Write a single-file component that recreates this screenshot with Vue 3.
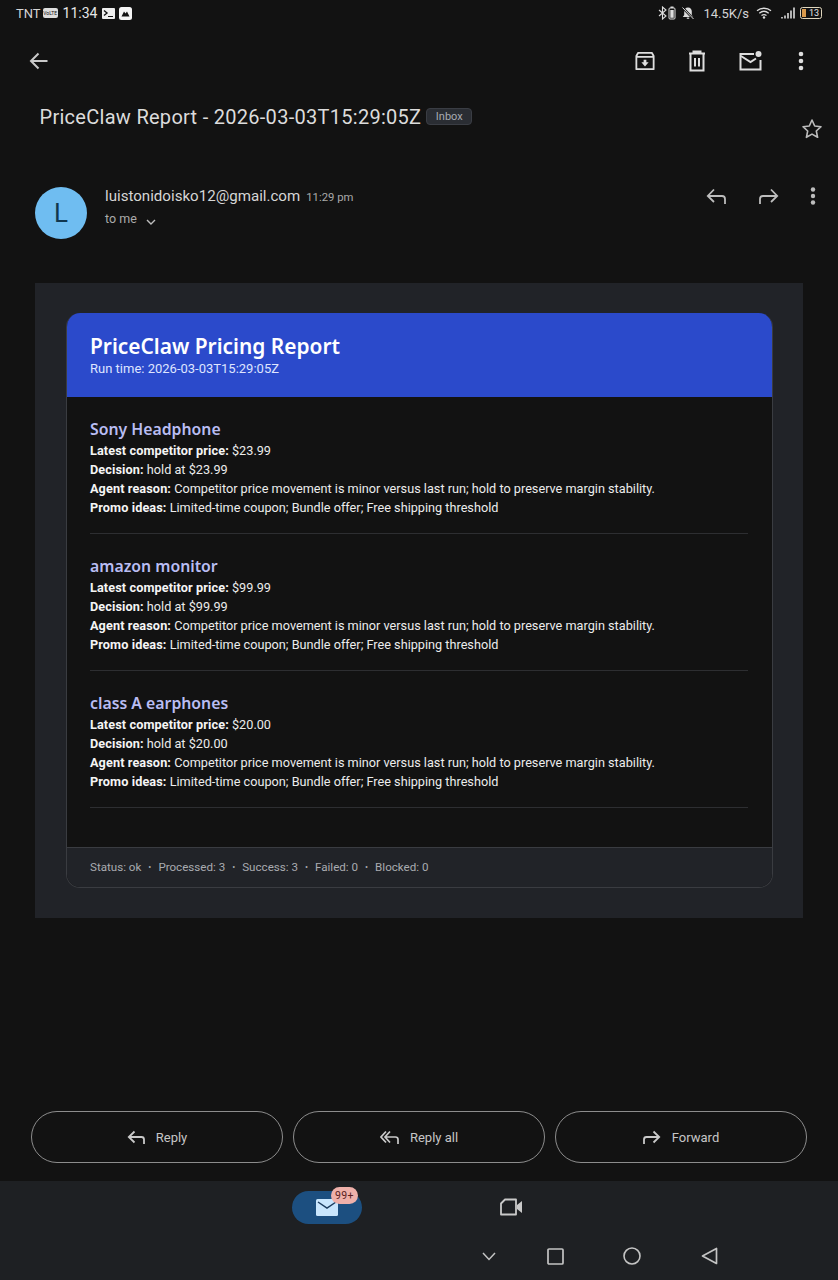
<script setup>
const products = [
  { name: 'Sony Headphone', price: '$23.99' },
  { name: 'amazon monitor', price: '$99.99' },
  { name: 'class A earphones', price: '$20.00' },
]
const reason = 'Competitor price movement is minor versus last run; hold to preserve margin stability.'
const promo = 'Limited-time coupon; Bundle offer; Free shipping threshold'
const stats = ['Status: ok', 'Processed: 3', 'Success: 3', 'Failed: 0', 'Blocked: 0']
</script>

<template>
  <div class="screen">
    <div class="status">
      <div class="status-side">
        <span class="carrier">TNT</span>
        <span class="volte">VoLTE</span>
        <span class="clock">11:34</span>
        <svg class="term" width="13" height="11" viewBox="0 0 13 11"><rect width="13" height="11" rx="1" fill="#eee"/><path d="M2 2.500 5 5 2 7.500" fill="none" stroke="#111" stroke-width="1.400"/><path d="M6 8.500h5" stroke="#111"/></svg>
        <svg class="app" width="13" height="13" viewBox="0 0 13 13"><rect width="13" height="13" rx="2.500" fill="#f4f4f4"/><path d="M2.500 9.500 5 4.500l1.500 2L8 4.500l2.500 5z" fill="#111"/></svg>
      </div>
      <div class="status-side">
        <svg width="10" height="14" viewBox="0 0 10 14"><path d="M1 4l7 6-3.500 3V1L8 4l-7 6" fill="none" stroke="#ddd" stroke-width="1.100"/></svg>
        <svg width="8" height="14" viewBox="0 0 8 14"><rect x="1" y="2" width="6" height="11" rx="1" fill="none" stroke="#ddd"/><rect x="2.500" y="0.500" width="3" height="1.500" fill="#ddd"/><rect x="2.300" y="4" width="3.400" height="7.800" fill="#ddd"/></svg>
        <svg class="bell" width="14" height="14" viewBox="0 0 14 14"><path d="M7 1.500c2.500 0 3.800 1.800 3.800 4V9l1.400 2H1.800l1.400-2V5.500c0-2.200 1.300-4 3.800-4z" fill="#ddd"/><path d="M5.800 12.200h2.400" stroke="#ddd" stroke-width="1.200"/><path d="M1.500 1.500l11 11.500" stroke="#111" stroke-width="2.400"/><path d="M1.500 1.500l11 11.500" stroke="#ddd" stroke-width="1"/></svg>
        <span class="speed">14.5K/s</span>
        <svg class="wifi" width="16" height="12" viewBox="0 0 16 12"><path d="M1 3.800C5 .4 11 .4 15 3.800M3.300 6.200c2.800-2.300 6.600-2.300 9.400 0M5.500 8.500c1.600-1.200 3.400-1.200 5 0" fill="none" stroke="#ddd" stroke-width="1.300"/><circle cx="8" cy="10.500" r="1.200" fill="#ddd"/></svg>
        <svg class="signal" width="14" height="12" viewBox="0 0 14 12"><path d="M1 10v1.500M4 8.500v3M7 6v5.500M10 3.500v8M13 .5v11" stroke="#ddd" stroke-width="1.600"/></svg>
        <div class="battery"><span class="battery-fill"></span><span class="battery-num">13</span></div>
      </div>
    </div>

    <div class="toolbar">
      <svg class="back" width="20" height="18" viewBox="0 0 20 18"><path d="M18.500 9H2M9.500 1.500 2 9l7.500 7.500" fill="none" stroke="#c9c9c9" stroke-width="2"/></svg>
      <div class="tools">
        <svg width="20" height="20" viewBox="0 0 22 22"><path d="M3.500 2h15l2 3.500V20H1.500V5.500zM1.500 6.500h19" fill="none" stroke="#dedede" stroke-width="2" stroke-linejoin="round"/><path d="M9.500 9.500h3v3H15L11 17l-4-4.500h2.500z" fill="#dedede"/></svg>
        <svg width="18" height="22" viewBox="0 0 18 22"><path d="M1 3.500h16M5.500 3V1.500h7V3M2.500 4v16.500h13V4" fill="none" stroke="#dedede" stroke-width="2"/><path d="M7 8v8.500M11 8v8.500" stroke="#dedede" stroke-width="2"/></svg>
        <svg width="23" height="20" viewBox="0 0 23 20"><path d="M15 3H1.500v15.500h20V9" fill="none" stroke="#dedede" stroke-width="2"/><path d="M2 5l9.500 6L17 7.500" fill="none" stroke="#dedede" stroke-width="2"/><circle cx="19.500" cy="3" r="3" fill="#dedede"/></svg>
        <svg class="tools-more" width="6" height="20" viewBox="0 0 6 20"><circle cx="3" cy="3" r="2.300" fill="#dedede"/><circle cx="3" cy="10" r="2.300" fill="#dedede"/><circle cx="3" cy="17" r="2.300" fill="#dedede"/></svg>
      </div>
    </div>

    <div class="subject-row">
      <span class="subject">PriceClaw Report - 2026-03-03T15:29:05Z</span>
      <span class="label">Inbox</span>
      <svg class="star" width="22" height="21" viewBox="0 0 22 21"><path d="M11 2l2.700 6 6.300.7-4.700 4.300 1.300 6.300L11 16.100l-5.600 3.200L6.700 13 2 8.700 8.300 8z" fill="none" stroke="#bdbdbd" stroke-width="1.600" stroke-linejoin="round"/></svg>
    </div>

    <div class="sender">
      <div class="avatar">L</div>
      <div class="sender-text">
        <div class="sender-line"><span class="address">luistonidoisko12@gmail.com</span><span class="time">11:29 pm</span></div>
        <div class="recipient"><span>to me</span><svg width="10" height="6" viewBox="0 0 10 6"><path d="M1 1l4 4 4-4" fill="none" stroke="#bdbdbd" stroke-width="1.400"/></svg></div>
      </div>
      <div class="sender-actions">
        <svg width="20" height="17" viewBox="0 0 20 17"><path d="M19 16v-5c0-2-1-3-3-3H2M8 1.500 1.800 8 8 14" fill="none" stroke="#bdbdbd" stroke-width="1.800"/></svg>
        <svg width="20" height="17" viewBox="0 0 20 17"><path d="M1 16v-5c0-2 1-3 3-3h14M12 1.500 18.200 8 12 14" fill="none" stroke="#bdbdbd" stroke-width="1.800"/></svg>
        <svg width="6" height="18" viewBox="0 0 6 18"><circle cx="3" cy="2.500" r="2.200" fill="#bdbdbd"/><circle cx="3" cy="9" r="2.200" fill="#bdbdbd"/><circle cx="3" cy="15.500" r="2.200" fill="#bdbdbd"/></svg>
      </div>
    </div>

    <div class="mail-wrap">
      <div class="card">
        <div class="card-head">
          <div class="card-title">PriceClaw Pricing Report</div>
          <div class="card-run">Run time: 2026-03-03T15:29:05Z</div>
        </div>
        <div class="card-body">
          <div v-for="p in products" :key="p.name" class="item">
            <div class="item-name">{{ p.name }}</div>
            <div class="item-line"><b>Latest competitor price:</b> {{ p.price }}</div>
            <div class="item-line"><b>Decision:</b> hold at {{ p.price }}</div>
            <div class="item-line"><b>Agent reason:</b> {{ reason }}</div>
            <div class="item-line"><b>Promo ideas:</b> {{ promo }}</div>
          </div>
        </div>
        <div class="card-foot">
          <template v-for="(s, i) in stats" :key="s">
            <span v-if="i" class="dot">•</span><span>{{ s }}</span>
          </template>
        </div>
      </div>
    </div>

    <div class="actions">
      <div class="pill">
        <svg width="18" height="15" viewBox="0 0 18 15"><path d="M17 14V9.500C17 8 16 7 14.500 7H2M7.500 1.500 1.800 7l5.700 5.500" fill="none" stroke="#c9c9c9" stroke-width="1.800"/></svg>
        <span>Reply</span>
      </div>
      <div class="pill">
        <svg width="19" height="15" viewBox="0 0 19 15"><path d="M18 14V9.500C18 8 17 7 15.500 7H6M10 1.500 5 7l5 5.500M6 1.500 1 7l5 5.500" fill="none" stroke="#c9c9c9" stroke-width="1.700"/></svg>
        <span>Reply all</span>
      </div>
      <div class="pill">
        <svg width="18" height="15" viewBox="0 0 18 15"><path d="M1 14V9.500C1 8 2 7 3.500 7H16M10.500 1.500 16.200 7l-5.700 5.500" fill="none" stroke="#c9c9c9" stroke-width="1.800"/></svg>
        <span>Forward</span>
      </div>
    </div>

    <div class="bottom">
      <div class="tabs">
        <div class="mail-tab">
          <svg width="22" height="17" viewBox="0 0 22 17"><rect width="22" height="17" rx="1.500" fill="#c9e6fd"/><path d="M2 3l9 6 9-6" fill="none" stroke="#1c3c5e" stroke-width="1.500"/></svg>
          <span class="badge">99+</span>
        </div>
        <svg class="video" width="24" height="18" viewBox="0 0 24 18"><path d="M6 1.500h11v15H2V5.500z" fill="none" stroke="#c9c9c9" stroke-width="1.800" stroke-linejoin="round"/><path d="M18 7l5-4v12l-5-4z" fill="#c9c9c9"/></svg>
      </div>
      <div class="nav">
        <svg class="nav-chevron" width="14" height="9" viewBox="0 0 14 9"><path d="M1 1l6 6.500L13 1" fill="none" stroke="#c4c4c4" stroke-width="1.500"/></svg>
        <svg width="17" height="17" viewBox="0 0 17 17"><rect x="1" y="1" width="15" height="15" rx="1" fill="none" stroke="#c4c4c4" stroke-width="1.700"/></svg>
        <svg width="18" height="18" viewBox="0 0 18 18"><circle cx="9" cy="9" r="8" fill="none" stroke="#c4c4c4" stroke-width="1.600"/></svg>
        <svg width="17" height="18" viewBox="0 0 17 18"><path d="M15.500 1.500v15L1.500 9z" fill="none" stroke="#c4c4c4" stroke-width="1.700" stroke-linejoin="round"/></svg>
      </div>
    </div>
  </div>
</template>

<style scoped>
.screen {
  width: 838px;
  height: 1280px;
  background: #121212;
  display: flex;
  flex-direction: column;
  font-family: Roboto, "Liberation Sans", sans-serif;
  color: #e3e3e3;
  overflow: hidden;
}
.status {
  height: 28px;
  padding: 0 16px 2px 16px;
  box-sizing: border-box;
  display: flex;
  justify-content: space-between;
  align-items: center;
}
.status-side { display: flex; align-items: center; }
.carrier { font-size: 13px; color: #d5d5d5; }
.volte {
  margin-left: 2px;
  width: 15px;
  height: 10px;
  background: #ddd;
  color: #111;
  font-size: 5px;
  line-height: 10px;
  text-align: center;
  border-radius: 2px;
  overflow: hidden;
}
.clock { margin: 0 5px; font-size: 14px; color: #e6e6e6; }
.app { margin-left: 4px; }
.bell { margin-left: 5px; }
.speed { margin: 0 7px 0 8px; font-size: 13px; color: #d5d5d5; }
.signal { margin-left: 9px; }
.battery {
  position: relative;
  margin-left: 5px;
  width: 20px;
  height: 10px;
  border: 1px solid #e0d6bd;
  border-radius: 2.500px;
  font-size: 9px;
  line-height: 10px;
  text-align: right;
  color: #e6e6e6;
}
.battery-fill { position: absolute; left: 1px; top: 1px; bottom: 1px; width: 4px; background: #d99a4c; }
.battery-num { position: relative; padding-right: 2px; }
.toolbar {
  height: 66px;
  padding: 0 34px 0 29px;
  display: flex;
  align-items: center;
  justify-content: space-between;
}
.tools { display: flex; align-items: center; gap: 33px; }
.tools-more { margin-left: 3.500px; }
.subject-row {
  position: relative;
  height: 93px;
  padding: 8px 0 0 39.500px;
  box-sizing: border-box;
  display: flex;
  align-items: flex-start;
  gap: 5px;
}
.subject { font-size: 20px; line-height: 30px; letter-spacing: 0.280px; color: #dcdcdc; white-space: nowrap; }
.label {
  margin-top: 6px;
  height: 17px;
  padding: 0 8.500px;
  background: #2a2d33;
  border: 1px solid #3a3d44;
  border-radius: 4px;
  font-size: 11px;
  line-height: 16px;
  color: #a8abb2;
  box-sizing: border-box;
}
.star { position: absolute; top: 24px; right: 15px; }
.sender { height: 96px; padding-left: 35px; display: flex; align-items: flex-start; }
.avatar {
  width: 52px;
  height: 52px;
  border-radius: 50%;
  background: #6fbdf1;
  color: #10364f;
  font-size: 26px;
  line-height: 52px;
  text-align: center;
  flex: none;
}
.sender-text { margin-left: 18px; }
.sender-line { display: flex; align-items: baseline; gap: 6px; line-height: 19px; }
.address { font-size: 15.100px; color: #d6d6d6; }
.time { font-size: 11.300px; color: #a9a9a9; }
.recipient { margin-top: 3px; display: flex; align-items: center; gap: 9px; font-size: 12.500px; line-height: 18px; color: #ababab; }
.recipient svg { margin-top: 5px; }
.sender-actions { margin-left: auto; margin-right: 22px; display: flex; align-items: center; gap: 32px; height: 18px; }
.sender-actions svg:first-child { margin-right: 1px; }
.sender-actions svg:last-child { margin-left: -1px; }
.mail-wrap {
  margin: 0 35px;
  padding: 30px 30px 30px 31px;
  height: 635px;
  box-sizing: border-box;
  background: #212328;
}
.card {
  height: 575px;
  box-sizing: border-box;
  border: 1px solid #3a3c41;
  border-top: 0;
  border-radius: 14px;
  background: #121212;
  overflow: hidden;
  display: flex;
  flex-direction: column;
}
.card-head { height: 84px; margin: 0 -1px; padding: 20px 24px 0; box-sizing: border-box; background: #2b4acb; color: #fff; }
.card-title { font-family: "Noto Sans", sans-serif; font-size: 20.900px; font-weight: 600; line-height: 26px; }
.card-run { font-size: 13px; line-height: 20px; color: #dfe5ff; }
.card-body { flex: 1; padding: 21px 24px 0 23px; }
.item { padding-bottom: 17px; margin-bottom: 21px; border-bottom: 1px solid #2d2e31; }
.item-name { font-family: "Noto Sans", sans-serif; font-size: 15.800px; font-weight: 600; line-height: 22px; color: #b9bdf2; }
.item-line { position: relative; top: 1px; font-size: 12.700px; line-height: 19px; color: #ececec; white-space: nowrap; }
.item-line b { font-weight: 700; color: #f5f5f5; letter-spacing: 0.100px; }
.card-foot {
  height: 40px;
  padding: 0 23px 2px;
  box-sizing: border-box;
  border-top: 1px solid #3a3c41;
  background: #212328;
  display: flex;
  align-items: center;
  gap: 6px;
  font-size: 11.600px;
  color: #a9abb0;
}
.dot { font-size: 9px; margin: 0 1px; }
.actions {
  margin-top: 193px;
  padding: 0 31px;
  display: grid;
  grid-template-columns: repeat(3, 252px);
  gap: 10px;
}
.pill {
  height: 52px;
  box-sizing: border-box;
  border: 1px solid #8c8c8c;
  border-radius: 26px;
  display: flex;
  align-items: center;
  justify-content: center;
  gap: 11px;
  font-size: 13px;
  color: #c6c6c6;
}
.bottom { margin-top: auto; height: 99px; background: #1e2023; }
.tabs { position: relative; height: 50px; }
.mail-tab {
  position: absolute;
  left: 292px;
  top: 10px;
  width: 70px;
  height: 33px;
  background: #1c4f80;
  border-radius: 17px;
  display: flex;
  align-items: center;
  justify-content: center;
}
.badge {
  position: absolute;
  left: 39px;
  top: -4px;
  width: 27px;
  height: 17px;
  background: #eeb0aa;
  border-radius: 9px;
  color: #5a1e1e;
  font-size: 10.500px;
  line-height: 17px;
  letter-spacing: 0.400px;
  text-align: center;
}
.video { position: absolute; left: 499px; top: 17px; }
.nav {
  padding: 1px 0 0 482px;
  height: 49px;
  box-sizing: border-box;
  display: flex;
  align-items: center;
  gap: 59.500px;
}
.nav-chevron { margin-right: -9px; }
</style>
